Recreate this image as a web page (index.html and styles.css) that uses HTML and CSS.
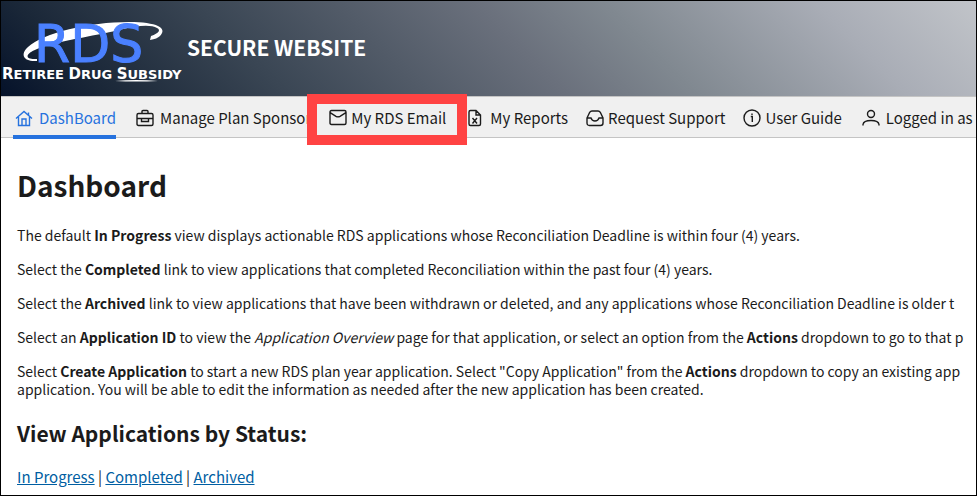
FILE: index.html
```html
<!DOCTYPE html>
<html lang="en">
<head>
    <meta charset="UTF-8">
    <meta name="viewport" content="width=device-width, initial-scale=1.0">
    <title>RDS Secure Website - Dashboard</title>
    <link rel="stylesheet" href="styles.css">
</head>
<body>
    <div class="page">
        <header class="site-header">
            <svg class="logo" viewBox="0 0 182 94" role="img" aria-label="Retiree Drug Subsidy">
                <path fill="#fff" d="M36 59C22 60 19 52 27 45C42 31 88 20 128 20C156 20 167 26 159 34C157 36 154 37 149 38L150 34C158 31 160 28 156 26C150 22 134 24 122 27C100 33 60 38 36 47C23 52 24 58 36 57Z"/>
                <text class="logo-name" x="33" y="60">RDS</text>
                <text class="logo-tagline" x="1" y="77"><tspan class="cap">R</tspan>ETIREE <tspan class="cap">D</tspan>RUG <tspan class="cap">S</tspan>UBSIDY</text>
                <path fill="#fff" d="M114 79Q135 77 157 79Q135 80 114 79Z"/>
            </svg>
            <span class="site-title">SECURE WEBSITE</span>
        </header>

        <nav class="main-nav">
            <a class="nav-item active" href="#">
                <svg class="icon icon-wide" viewBox="0 0 18 18"><path d="M1 9.5L9 2.5L17 9.5M3.5 8V16.500H14.500V8M7 16.500V10H11V16.500M13.500 6V3.500"/></svg>
                DashBoard
            </a>
            <a class="nav-item" href="#">
                <svg class="icon icon-wide" viewBox="0 0 18 18"><path d="M2.500 4.500H15.500Q17 4.500 17 6V15Q17 16.500 15.500 16.500H2.500Q1 16.500 1 15V6Q1 4.500 2.500 4.500ZM6 4.500V2.500Q6 1.500 7 1.500H11Q12 1.500 12 2.500V4.500M1 9.500H17M5.500 9.500V12.500H12.500V9.500"/></svg>
                Manage Plan Sponsor
            </a>
            <a class="nav-item highlighted" href="#">
                <svg class="icon" viewBox="0 0 18 18"><path d="M2.500 1.500H15.500Q17 1.500 17 3V14Q17 15.500 15.500 15.500H2.500Q1 15.500 1 14V3Q1 1.500 2.500 1.500ZM1.500 3.800L7 7.300Q9 8.500 11 7.300L16.500 3.800"/></svg>
                My RDS Email
            </a>
            <a class="nav-item" href="#">
                <svg class="icon icon-wide" viewBox="0 0 18 18"><path d="M10 1.500H4.500Q3 1.500 3 3V15Q3 16.500 4.500 16.500H13Q14.500 16.500 14.500 15V6ZM10 1.500V6H14.500M6.500 9L11 14.500M11 9L6.500 14.500"/></svg>
                My Reports
            </a>
            <a class="nav-item" href="#">
                <svg class="icon" viewBox="0 0 18 18"><path d="M1 9L3.700 3.300Q4.500 2 6 2H12Q13.500 2 14.300 3.300L17 9V14Q17 16.500 14.500 16.500H3.500Q1 16.500 1 14ZM1 9H5Q6 12 9 12Q12 12 13 9H17"/></svg>
                Request Support
            </a>
            <a class="nav-item" href="#">
                <svg class="icon" viewBox="0 0 18 18"><circle cx="9" cy="9" r="8"/><path d="M7.800 7.500H9.300V13M9 4.600V5.900"/></svg>
                User Guide
            </a>
            <a class="nav-item" href="#">
                <svg class="icon icon-wide" viewBox="0 0 18 18"><circle cx="9" cy="5" r="3.500"/><path d="M1 16.500V15.500Q1.500 11.500 9 11.500Q16.500 11.500 17 15.500V16.500"/></svg>
                Logged in as
            </a>
        </nav>

        <main class="content">
            <h1>Dashboard</h1>
            <p>The default <b>In Progress</b> view displays actionable RDS applications whose Reconciliation Deadline is within four (4) years.</p>
            <p>Select the <b>Completed</b> link to view applications that completed Reconciliation within the past four (4) years.</p>
            <p>Select the <b>Archived</b> link to view applications that have been withdrawn or deleted, and any applications whose Reconciliation Deadline is older t</p>
            <p>Select an <b>Application ID</b> to view the <i>Application Overview</i> page for that application, or select an option from the <b>Actions</b> dropdown to go to that p</p>
            <p>Select <b>Create Application</b> to start a new RDS plan year application. Select "Copy Application" from the <b>Actions</b> dropdown to copy an existing app<br>application. You will be able to edit the information as needed after the new application has been created.</p>
            <h2>View Applications by Status:</h2>
            <div class="status-links">
                <a href="#">In Progress</a> | <a href="#">Completed</a> | <a href="#">Archived</a>
            </div>
        </main>
    </div>
</body>
</html>
```
FILE: styles.css
```css
:root {
    --text-color: #1b1b1b;
    --active-blue: #2672de;
    --link-blue: #005ea2;
    --nav-bg: #f0f0f0;
    --line-color: #c4c4c4;
    --highlight-red: #ff4343;
}

* {
    box-sizing: border-box;
}

body {
    margin: 0;
    font-family: "Noto Sans CJK SC", "Open Sans", sans-serif;
    font-size: 14px;
    line-height: 18px;
    color: var(--text-color);
    background-color: #fff;
}

.page {
    min-height: 100vh;
    border: 1px solid #000;
    overflow: hidden;
}

/* header */
.site-header {
    display: flex;
    align-items: center;
    gap: 4px;
    height: 95px;
    background: linear-gradient(45deg, #05122a 0%, #1a2738 10%, #3a4654 27%, #6a707c 53%, #808890 65%, #a9adb6 85%, #c1c4c9 100%);
}

.logo {
    width: 182px;
    height: 94px;
    flex-shrink: 0;
}

.logo-name {
    font-family: "DejaVu Sans", sans-serif;
    font-size: 52px;
    fill: #4a80ff;
    stroke: #4a80ff;
}

.logo-tagline {
    font-family: "DejaVu Sans", sans-serif;
    font-size: 13px;
    font-weight: bold;
    fill: #fff;
}

.logo-tagline .cap {
    font-size: 15px;
}

.site-title {
    padding-bottom: 4px;
    font-size: 21px;
    line-height: 24px;
    font-weight: bold;
    color: #fff;
}

/* navigation */
.main-nav {
    display: flex;
    gap: 18px;
    height: 42px;
    padding: 0 12px;
    background-color: var(--nav-bg);
    border-top: 1px solid var(--line-color);
    border-bottom: 1px solid var(--line-color);
    font-size: 15px;
    white-space: nowrap;
}

.nav-item {
    position: relative;
    display: flex;
    align-items: center;
    gap: 4px;
    height: 42px;
    color: var(--text-color);
    text-decoration: none;
}

.nav-item.active {
    color: var(--active-blue);
    border-bottom: 4px solid var(--active-blue);
    padding-top: 4px;
}

.nav-item.highlighted::after {
    content: "";
    position: absolute;
    inset: -3px -21px -6px -22px;
    border: 10px solid var(--highlight-red);
    z-index: 1;
}

.icon {
    width: 18px;
    height: 18px;
    flex-shrink: 0;
    fill: none;
    stroke: currentColor;
    stroke-width: 1.4;
}

.icon-wide {
    margin: 0 2px;
}

/* content */
.content {
    padding: 31px 16px 8px;
    white-space: nowrap;
}

h1 {
    margin: 0 0 25px;
    font-size: 28px;
    line-height: 32px;
}

p {
    margin: 0 0 16px;
}

h2 {
    margin: 23px 0;
    font-size: 21px;
    line-height: 24px;
}

.status-links {
    font-size: 15px;
}

.status-links a {
    color: var(--link-blue);
}
```
